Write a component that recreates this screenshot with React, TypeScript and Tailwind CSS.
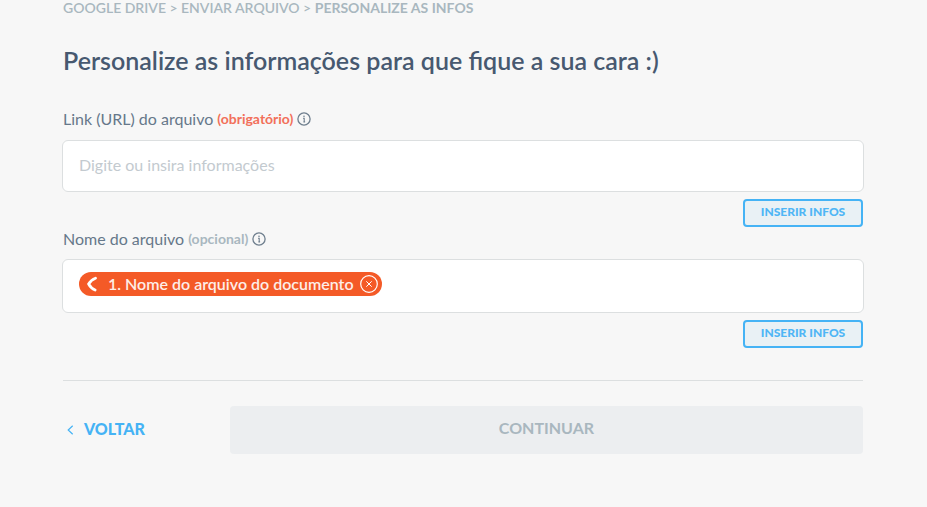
import React, { useState } from 'react';

const InfoIcon: React.FC = () => (
    <svg className="h-[14px] w-[14px] shrink-0 text-[#6f7f8e]" viewBox="0 0 14 14" fill="none" stroke="currentColor" aria-hidden="true">
        <circle cx="7" cy="7" r="6.1" strokeWidth="1.3" />
        <path d="M6 6.2h1.2v3.6M6.4 9.9h1.7" strokeWidth="1.1" />
        <circle cx="7" cy="4.2" r="0.8" fill="currentColor" stroke="none" />
    </svg>
);

type FieldLabelProps = {
    htmlFor: string;
    label: string;
    hint: string;
    required?: boolean;
};

const FieldLabel: React.FC<FieldLabelProps> = ({ htmlFor, label, hint, required }) => (
    <div className="flex items-center gap-1 px-px leading-5">
        <label htmlFor={htmlFor} className="flex items-center gap-1 text-base leading-5 text-[#66788a]">
            {label}
            <span className={required ? 'text-sm leading-5 font-bold text-[#f2705a]' : 'text-sm leading-5 font-bold text-[#a9b7c0]'}>
                {hint}
            </span>
        </label>
        <InfoIcon />
    </div>
);

const InsertButton: React.FC = () => (
    <div className="mt-[7px] flex justify-end px-px">
        <button
            type="button"
            className="flex h-7 w-[120px] items-center justify-center rounded-[4px] border-2 border-[#45b3f5] bg-[#e9f1f5] pb-0.5 text-xs font-black text-[#4fb6f5]"
        >
            INSERIR INFOS
        </button>
    </div>
);

type TagProps = {
    label: string;
    onRemove: () => void;
};

const Tag: React.FC<TagProps> = ({ label, onRemove }) => (
    <span className="flex h-6 shrink-0 items-center rounded-full bg-[#f45a27] pr-1 pl-2 text-base font-semibold text-[#fdeee8]">
        <svg className="mr-[11px] h-4 w-[10px]" viewBox="0 0 10 16" fill="none" stroke="#fff" strokeLinecap="round" strokeLinejoin="round" aria-hidden="true">
            <path d="M8.5 2.2C5.7 3.2 3.2 5.3 1.6 8c1.5 2.7 3.7 4.9 6.5 6" strokeWidth="2.8" />
        </svg>
        {label}
        <button type="button" aria-label="Remover" onClick={onRemove} className="ml-1.5">
            <svg className="h-[18px] w-[18px]" viewBox="0 0 18 18" fill="none" stroke="#fff" aria-hidden="true">
                <circle cx="9" cy="9" r="8.3" strokeWidth="1.2" />
                <path d="M6.3 6.3l5.4 5.4M11.7 6.3l-5.4 5.4" strokeWidth="1" />
            </svg>
        </button>
    </span>
);

const App: React.FC = () => {
    const [link, setLink] = useState('');
    const [name, setName] = useState('');
    const [tags, setTags] = useState(['1. Nome do arquivo do documento']);

    return (
        <main className="min-h-screen bg-[#f7f7f7] pr-[63px] pb-10 pl-[62px] font-['Lato','Open_Sans',sans-serif]">
            <nav className="px-px text-sm leading-4 font-semibold text-[#a9b7bf]">
                GOOGLE DRIVE &gt; ENVIAR ARQUIVO &gt; <span className="font-bold">PERSONALIZE AS INFOS</span>
            </nav>
            <h1 className="mt-7 px-px text-[25px] leading-8 font-semibold text-[#475970]">
                Personalize as informações para que fique a sua cara :)
            </h1>

            <form onSubmit={(e) => e.preventDefault()}>
                <div className="mt-[33px]">
                    <FieldLabel htmlFor="link" label="Link (URL) do arquivo" hint="(obrigatório)" required />
                    <input
                        id="link"
                        type="text"
                        value={link}
                        onChange={(e) => setLink(e.target.value)}
                        placeholder="Digite ou insira informações"
                        className="mt-[11px] block h-[52px] w-full rounded-md border border-[#dcdfe0] bg-white px-4 pb-1 text-base text-[#66788a] placeholder-[#c3cacf] focus:outline-none"
                    />
                    <InsertButton />
                </div>

                <div className="mt-[2px]">
                    <FieldLabel htmlFor="name" label="Nome do arquivo" hint="(opcional)" />
                    <div className="mt-[10px] flex h-[54px] items-start rounded-md border border-[#dcdfe0] bg-white px-4 pt-3">
                        {tags.map((tag) => (
                            <Tag key={tag} label={tag} onRemove={() => setTags(tags.filter((item) => item !== tag))} />
                        ))}
                        <input
                            id="name"
                            type="text"
                            value={name}
                            onChange={(e) => setName(e.target.value)}
                            className="h-6 min-w-0 flex-1 bg-transparent px-2 text-base text-[#66788a] focus:outline-none"
                        />
                    </div>
                    <InsertButton />
                </div>

                <div className="mx-px mt-8 flex border-t border-[#dcdfe0] pt-[25px]">
                    <div className="flex w-[167px] shrink-0 items-center">
                        <button type="button" className="flex items-center gap-[10px] pb-0.5 pl-1 text-base font-black text-[#45b3f5]">
                            <svg className="mt-0.5 h-[10px] w-[7px]" viewBox="0 0 7 10" fill="none" stroke="currentColor" aria-hidden="true">
                                <path d="M5.7.7L1.2 5l4.5 4.3" strokeWidth="1.2" />
                            </svg>
                            VOLTAR
                        </button>
                    </div>
                    <button type="submit" disabled className="h-12 flex-1 rounded-[4px] bg-[#eceef0] pb-1 text-base font-bold text-[#a9b7bf]">
                        CONTINUAR
                    </button>
                </div>
            </form>
        </main>
    );
};

export default App;
